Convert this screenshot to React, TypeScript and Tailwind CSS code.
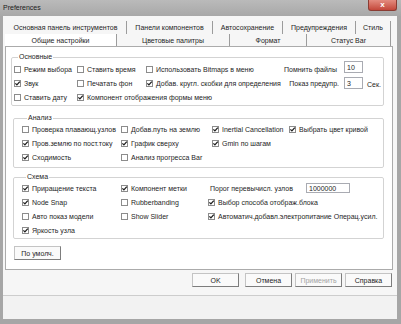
import clsx from "clsx";

function Box({ on }: { on?: boolean }) {
  return (
    <span className="flex h-[7px] w-[7px] shrink-0 items-center justify-center border border-[#8c8c8c] bg-white">
      {on && (
        <svg viewBox="0 0 5 5" className="h-[5px] w-[5px] overflow-visible">
          <path d="M0.4 2.4 L1.9 3.9 L4.8 0.6" stroke="#1e1e1e" strokeWidth="1.3" fill="none" />
        </svg>
      )}
    </span>
  );
}

function Chk({ on, label, className }: { on?: boolean; label: string; className?: string }) {
  return (
    <div className={clsx("flex items-center whitespace-nowrap", className)}>
      <Box on={on} />
      <span className="ml-[3px]">{label}</span>
    </div>
  );
}

function Field({ value, className }: { value: string; className?: string }) {
  return (
    <div className={clsx("flex items-center border border-[#a9abb2] bg-white pl-[2px]", className)}>
      {value}
    </div>
  );
}

function Btn({ label, disabled, className }: { label: string; disabled?: boolean; className?: string }) {
  return (
    <div
      className={clsx(
        "flex h-[14px] w-[47px] items-center justify-center border border-[#c4c4c4] border-r-[#7d7d7d] border-b-[#7d7d7d] bg-[#fafafa]",
        disabled ? "text-[#a3a3a3]" : "text-[#1e1e1e]",
        className
      )}
    >
      {label}
    </div>
  );
}

export default function App() {
  return (
    <div className="flex h-[324px] w-[401px] flex-col whitespace-nowrap bg-[#a6a6a6] font-[family-name:Liberation_Sans,Arial,sans-serif] text-[7px] leading-none text-[#1e1e1e]">
      {/* Title bar */}
      <div className="flex h-[16px] shrink-0 items-start justify-between bg-gradient-to-b from-[#bababa] to-[#a8a8a8]">
        <span className="pl-[3px] pt-[4px] text-[#202020]">Preferences</span>
        <div className="mr-[4px] flex h-[11px] w-[29px] items-center justify-center rounded-b-[3px] border border-t-0 border-[#8a3c33] bg-gradient-to-b from-[#e38b7f] to-[#c3463a] text-[8px] font-bold text-white">
          x
        </div>
      </div>

      {/* Dialog body */}
      <div className="mb-[5px] ml-[3px] mr-[4px] flex flex-1 flex-col bg-[#f6f6f6] pt-[5px]">
        {/* Tabs, back row */}
        <div className="ml-[2px] flex h-[13px]">
          <div className="flex w-[122px] items-center justify-center border-r border-[#9c9c9c]">Основная панель инструментов</div>
          <div className="flex w-[86px] items-center justify-center border-r border-[#9c9c9c]">Панели компонентов</div>
          <div className="flex w-[70px] items-center justify-center border-r border-[#9c9c9c]">Автосохранение</div>
          <div className="flex w-[73px] items-center justify-center border-r border-[#9c9c9c]">Предупреждения</div>
          <div className="flex w-[35px] items-center justify-center border-r border-[#9c9c9c]">Стиль</div>
        </div>
        {/* Tabs, front row */}
        <div className="ml-[2px] flex h-[12px]">
          <div className="flex w-[112px] items-center justify-center border-r border-[#9c9c9c] bg-white">Общие настройки</div>
          <div className="flex w-[113px] items-center justify-center border-r border-[#9c9c9c]">Цветовые палитры</div>
          <div className="flex w-[77px] items-center justify-center border-r border-[#9c9c9c]">Формат</div>
          <div className="flex w-[84px] items-center justify-center border-r border-[#9c9c9c]">Статус Bar</div>
        </div>

        {/* Tab panel */}
        <div className="ml-[2px] flex h-[224px] w-[388px] flex-col border border-[#ababab] bg-white pt-[6px]">
          <fieldset className="ml-[5px] w-[373px] rounded-[2px] border border-[#d3d3d3] pb-[1px] pl-[2px] pt-[1px]">
            <legend className="ml-[4px] px-[1px] leading-[8px]">Основные</legend>
            <div className="flex h-[14px] items-center">
              <Chk label="Режим выбора" className="w-[63px]" />
              <Chk label="Ставить время" className="w-[69px]" />
              <Chk label="Использовать Bitmaps в меню" className="flex-1" />
              <span className="mr-[7px]">Помнить файлы</span>
              <Field value="10" className="mb-[4px] h-[12px] w-[19px]" />
              <span className="w-[20px]" />
            </div>
            <div className="flex h-[14px] items-center">
              <Chk on label="Звук" className="w-[63px]" />
              <Chk label="Печатать фон" className="w-[69px]" />
              <Chk on label="Добав. кругл. скобки для определения" className="flex-1" />
              <span className="mr-[5px]">Показ предупр.</span>
              <Field value="3" className="h-[12px] w-[19px]" />
              <span className="w-[20px] pl-[4px] pt-[3px]">Сек.</span>
            </div>
            <div className="flex h-[14px] items-center">
              <Chk label="Ставить дату" className="w-[63px]" />
              <Chk on label="Компонент отображения формы меню" />
            </div>
          </fieldset>

          <fieldset className="ml-[7px] mt-[8px] w-[371px] rounded-[2px] border border-[#d3d3d3] pb-[3px] pl-[8px]">
            <legend className="ml-[5px] px-[1px] leading-[8px]">Анализ</legend>
            <div className="flex h-[14px] items-center">
              <Chk label="Проверка плавающ.узлов" className="w-[99px]" />
              <Chk label="Добав.путь на землю" className="w-[91px]" />
              <Chk on label="Inertial Cancellation" className="w-[77px]" />
              <Chk on label="Выбрать цвет кривой" />
            </div>
            <div className="flex h-[14px] items-center">
              <Chk on label="Пров.землю по пост.току" className="w-[99px]" />
              <Chk on label="График сверху" className="w-[91px]" />
              <Chk on label="Gmin по шагам" className="w-[77px]" />
            </div>
            <div className="flex h-[14px] items-center">
              <Chk on label="Сходимость" className="w-[99px]" />
              <Chk label="Анализ прогресса Bar" />
            </div>
          </fieldset>

          <fieldset className="ml-[7px] mt-[5px] w-[371px] rounded-[2px] border border-[#d3d3d3] pb-[1px] pl-[8px]">
            <legend className="ml-[4px] px-[1px] leading-[8px]">Схема</legend>
            <div className="flex h-[14px] items-center">
              <Chk on label="Приращение текста" className="w-[99px]" />
              <Chk on label="Компонент метки" className="w-[87px]" />
              <span className="w-[98px] pl-[2px]">Порог перевычисл. узлов</span>
              <Field value="1000000" className="h-[10px] w-[44px]" />
            </div>
            <div className="flex h-[14px] items-center">
              <Chk on label="Node Snap" className="w-[99px]" />
              <Chk label="Rubberbanding" className="w-[87px]" />
              <Chk on label="Выбор способа отображ.блока" />
            </div>
            <div className="flex h-[14px] items-center">
              <Chk label="Авто показ модели" className="w-[99px]" />
              <Chk label="Show Slider" className="w-[87px]" />
              <Chk on label="Автоматич.добавл.электропитание Операц.усил." />
            </div>
            <div className="flex h-[14px] items-center">
              <Chk on label="Яркость узла" />
            </div>
          </fieldset>

          <Btn label="По умолч." className="ml-[8px] mt-[7px] h-[13px]" />
        </div>

        {/* Dialog buttons */}
        <div className="mt-[3px] flex justify-end pr-[5px]">
          <Btn label="OK" className="border-[#8e8e8e]" />
          <Btn label="Отмена" className="ml-[6px]" />
          <Btn label="Применить" disabled className="ml-[3px]" />
          <Btn label="Справка" className="ml-[3px]" />
        </div>

        <div className="mt-[8px] flex-1 border-t border-[#cdcdcd] bg-[#f2f2f2]" />
      </div>
    </div>
  );
}
